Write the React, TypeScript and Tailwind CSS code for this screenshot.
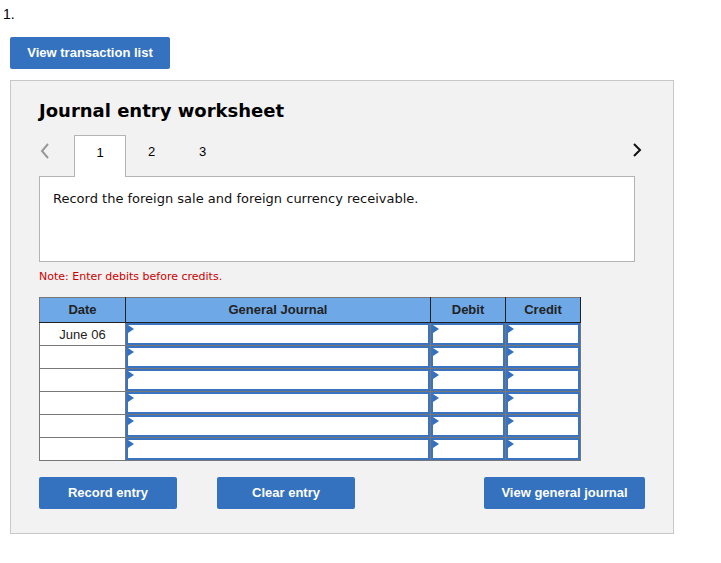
const rows = ["June 06", "", "", "", "", ""];

function Arrow() {
  return (
    <span className="absolute left-0 top-0 w-0 h-0 border-t-[4px] border-b-[4px] border-l-[6px] border-t-transparent border-b-transparent border-l-[#3470be]" />
  );
}

function InputCell() {
  return (
    <td className="border border-[#777] p-0 h-[23px]">
      <div className="relative h-[22px] border-2 border-[#3a73c0] bg-white">
        <Arrow />
      </div>
    </td>
  );
}

function BlueButton({ label, width }: { label: string; width: string }) {
  return (
    <button
      className={`${width} h-[32px] rounded-[2px] bg-[#3471be] text-white text-[13px] font-bold font-['Liberation_Sans',Arial,sans-serif]`}
    >
      {label}
    </button>
  );
}

export default function App() {
  return (
    <div className="w-[721px] h-[563px] bg-white font-['Liberation_Sans',Arial,sans-serif] text-[#222]">
      <div className="pl-[3px] pt-[6px] text-[14px] leading-[16px] text-black">1.</div>

      <div className="pl-[10px] pt-[15px]">
        <BlueButton label="View transaction list" width="w-[160px]" />
      </div>

      <div className="ml-[10px] mt-[11px] w-[664px] h-[454px] border border-[#c8c8c8] bg-[#f2f2f2] pl-[28px] pr-[39px]">
        <h2 className="pt-[19px] text-[18px] leading-[22px] font-bold text-black font-['DejaVu_Sans',Verdana,sans-serif]">
          Journal entry worksheet
        </h2>

        <div className="mt-[13px] flex items-start h-[41px] relative">
          <div className="w-[35px] pt-[8px] pl-[1px]">
            <svg width="10" height="16" viewBox="0 0 10 16">
              <path d="M8 1 L2 8 L8 15" fill="none" stroke="#999" strokeWidth="2" />
            </svg>
          </div>
          <div className="w-[52px] h-[42px] bg-white border border-b-0 border-[#b4b4b4] pt-[9px] text-center text-[13px] leading-[16px] text-black relative z-10">
            1
          </div>
          <div className="w-[51px] pt-[9px] text-center text-[13px] leading-[16px] text-black">2</div>
          <div className="w-[51px] pt-[9px] text-center text-[13px] leading-[16px] text-black">3</div>
          <div className="flex-1" />
          <div className="pt-[7px] mr-[-8px]">
            <svg width="10" height="16" viewBox="0 0 10 16">
              <path d="M2 2 L8 8 L2 14" fill="none" stroke="#111" strokeWidth="2" />
            </svg>
          </div>
        </div>

        <div className="w-[596px] h-[86px] bg-white border border-[#b4b4b4] pl-[13px] pt-[14px] text-[13px] leading-[16px] text-[#111] font-['DejaVu_Sans',Verdana,sans-serif]">
          Record the foreign sale and foreign currency receivable.
        </div>

        <p className="mt-[8px] text-[11px] leading-[14px] text-[#cc0000] font-['DejaVu_Sans',Verdana,sans-serif]">
          Note: Enter debits before credits.
        </p>

        <table className="mt-[13px] border-collapse w-[541px] table-fixed">
          <colgroup>
            <col className="w-[86px]" />
            <col className="w-[305px]" />
            <col className="w-[75px]" />
            <col className="w-[75px]" />
          </colgroup>
          <thead>
            <tr className="h-[25px] bg-[#6fa8e6] text-[13px] font-bold text-[#222]">
              <th className="border border-[#222] border-l-[#777] border-t-[#777]">Date</th>
              <th className="border border-[#222] border-t-[#777]">General Journal</th>
              <th className="border border-[#222] border-t-[#777]">Debit</th>
              <th className="border border-[#222] border-t-[#777]">Credit</th>
            </tr>
          </thead>
          <tbody>
            {rows.map((d, i) => (
              <tr key={i}>
                <td className="border border-[#777] bg-white h-[23px] p-0 text-center align-top pt-[2px] text-[13px] text-[#222]">
                  {d}
                </td>
                <InputCell />
                <InputCell />
                <InputCell />
              </tr>
            ))}
          </tbody>
        </table>

        <div className="mt-[16px] flex">
          <BlueButton label="Record entry" width="w-[138px]" />
          <div className="w-[40px]" />
          <BlueButton label="Clear entry" width="w-[138px]" />
          <div className="flex-1" />
          <div className="mr-[-11px]">
            <BlueButton label="View general journal" width="w-[161px]" />
          </div>
        </div>
      </div>
    </div>
  );
}
